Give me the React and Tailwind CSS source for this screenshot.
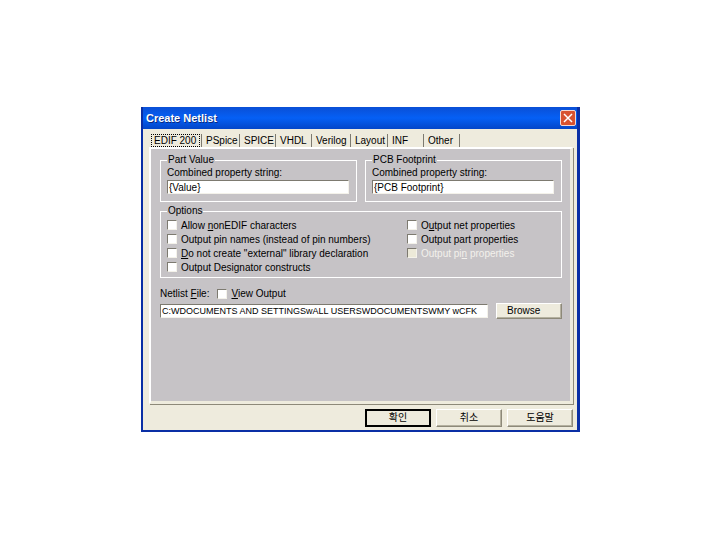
import React, { useState } from 'react';
import clsx from 'clsx';

const TABS = [
  { label: 'EDIF 200', width: 'w-[51px]' },
  { label: 'PSpice', width: 'w-[38px]' },
  { label: 'SPICE', width: 'w-[36px]' },
  { label: 'VHDL', width: 'w-[36px]' },
  { label: 'Verilog', width: 'w-[39px]' },
  { label: 'Layout', width: 'w-[37px]' },
  { label: 'INF', width: 'w-[36px]' },
  { label: 'Other', width: 'w-[36px]' },
];

const SUNKEN =
  'border border-t-[#7d7a70] border-l-[#7d7a70] border-r-[#f4f2ea] border-b-[#f4f2ea]';

function Group({ title, className, children }) {
  return (
    <fieldset className={clsx('min-w-0 border border-white pr-[7px] pl-[6px]', className)}>
      <legend className="h-[12px] px-px leading-[12px]">{title}</legend>
      {children}
    </fieldset>
  );
}

function Field({ label, value }) {
  return (
    <label className="block">
      <span className="block h-[14px] leading-[13px]">{label}</span>
      <input
        type="text"
        defaultValue={value}
        className={clsx('block h-[14px] w-full bg-white px-px outline-none', SUNKEN)}
      />
    </label>
  );
}

function Check({ children, disabled }) {
  return (
    <label className={clsx('flex h-[14px] items-center gap-[4px]', disabled && 'text-[#f3f1ec]')}>
      <input
        type="checkbox"
        disabled={disabled}
        className={clsx(
          'h-[10px] w-[10px] shrink-0 appearance-none',
          disabled ? 'bg-[#ece9d8]' : 'bg-white checked:bg-[#316ac5]',
          SUNKEN
        )}
      />
      <span className="whitespace-nowrap">{children}</span>
    </label>
  );
}

function PushButton({ children, isDefault, className }) {
  return (
    <button
      type="button"
      className={clsx(
        'w-[66px] bg-[#eeebdd]',
        isDefault
          ? 'border-2 border-black'
          : 'border border-t-white border-l-white border-r-[#8d8979] border-b-[#8d8979] shadow-[inset_-1px_-1px_0_#b5b1a0]',
        className
      )}
    >
      {children}
    </button>
  );
}

function App() {
  const [active, setActive] = useState(TABS[0].label);

  return (
    <main className="min-h-screen bg-white pt-[107px] pr-[140px] pl-[141px] font-['Liberation_Sans','Noto_Sans_CJK_KR',sans-serif] text-[10px] text-black">
      <section className="border-r-[3px] border-b-2 border-l-2 border-[#0a2fa5] bg-[#eeebdd]">
        <header className="flex h-[22px] items-center justify-between bg-linear-to-b from-[#0a4fd6] via-[#0560f5] to-[#0346c8] pr-px pl-[3px]">
          <h1 className="text-[11px] font-bold text-white [text-shadow:1px_1px_0_#0a2a80]">
            Create Netlist
          </h1>
          <button
            type="button"
            aria-label="Close"
            className="flex h-[16px] w-[16px] items-center justify-center rounded-[2px] border border-[#f3d9d2] bg-[#d8522f]"
          >
            <svg viewBox="0 0 10 10" className="h-[10px] w-[10px]" stroke="white" strokeWidth="1.5">
              <path d="M1 1 L9 9 M9 1 L1 9" />
            </svg>
          </button>
        </header>

        <div className="pt-[5px] pr-[4px] pb-[3px] pl-[6px]">
          <div role="tablist" className="flex h-[13px] pl-[2px]">
            {TABS.map((tab) => (
              <button
                key={tab.label}
                type="button"
                role="tab"
                aria-selected={active === tab.label}
                onClick={() => setActive(tab.label)}
                className={clsx(
                  'shrink-0 border-r border-[#7d7a70] text-left leading-[13px] whitespace-nowrap',
                  tab.width,
                  active === tab.label ? 'pr-px' : 'pl-[4px]'
                )}
              >
                <span
                  className={clsx(
                    active === tab.label &&
                      'block border border-dotted border-black pl-[2px] leading-[11px]'
                  )}
                >
                  {tab.label}
                </span>
              </button>
            ))}
          </div>

          <div className="border-2 border-t-white border-r-[#eeebdd] border-b-[#eeebdd] border-l-white pr-px pb-px shadow-[inset_-1px_-1px_0_#eeebdd,inset_-2px_-2px_0_#eeebdd,1px_1px_0_#8d8979]">
            <div className="min-h-[252px] bg-[#c6c3c6] pt-[5px] pr-[8px] pl-[9px]">
              <div className="flex gap-[8px]">
                <Group title="Part Value" className="h-[48px] flex-1">
                  <Field label="Combined property string:" value="{Value}" />
                </Group>
                <Group title="PCB Footprint" className="h-[48px] flex-1">
                  <Field label="Combined property string:" value="{PCB Footprint}" />
                </Group>
              </div>

              <Group title="Options" className="mt-[3px] h-[73px]">
                <div className="flex pt-px">
                  <div className="w-[240px]">
                    <Check>
                      Allow <u>n</u>onEDIF characters
                    </Check>
                    <Check>Output pin names (instead of pin numbers)</Check>
                    <Check>
                      <u>D</u>o not create &quot;external&quot; library declaration
                    </Check>
                    <Check>Output Designator constructs</Check>
                  </div>
                  <div>
                    <Check>
                      O<u>u</u>tput net properties
                    </Check>
                    <Check>Output part properties</Check>
                    <Check disabled>
                      Output pi<u>n</u> properties
                    </Check>
                  </div>
                </div>
              </Group>

              <div className="mt-[8px] flex items-center gap-[8px]">
                <label htmlFor="netlist-file">
                  Netlist <u>F</u>ile:
                </label>
                <Check>
                  <u>V</u>iew Output
                </Check>
              </div>
              <div className="mt-[2px] flex items-center gap-[8px]">
                <input
                  id="netlist-file"
                  type="text"
                  defaultValue="C:WDOCUMENTS AND SETTINGSwALL USERSWDOCUMENTSWMY wCFK"
                  className={clsx(
                    'h-[14px] min-w-0 flex-1 bg-white px-px text-[9px] outline-none',
                    SUNKEN
                  )}
                />
                <PushButton className="h-[16px] pl-[10px] text-left leading-[14px]">
                  Browse
                </PushButton>
              </div>
            </div>
          </div>

          <footer className="mt-[5px] flex justify-end gap-[5px]">
            <PushButton isDefault className="h-[18px] leading-[14px]">
              확인
            </PushButton>
            <PushButton className="h-[18px] leading-[16px]">취소</PushButton>
            <PushButton className="h-[18px] leading-[16px]">도움말</PushButton>
          </footer>
        </div>
      </section>
    </main>
  );
}

export default App;
